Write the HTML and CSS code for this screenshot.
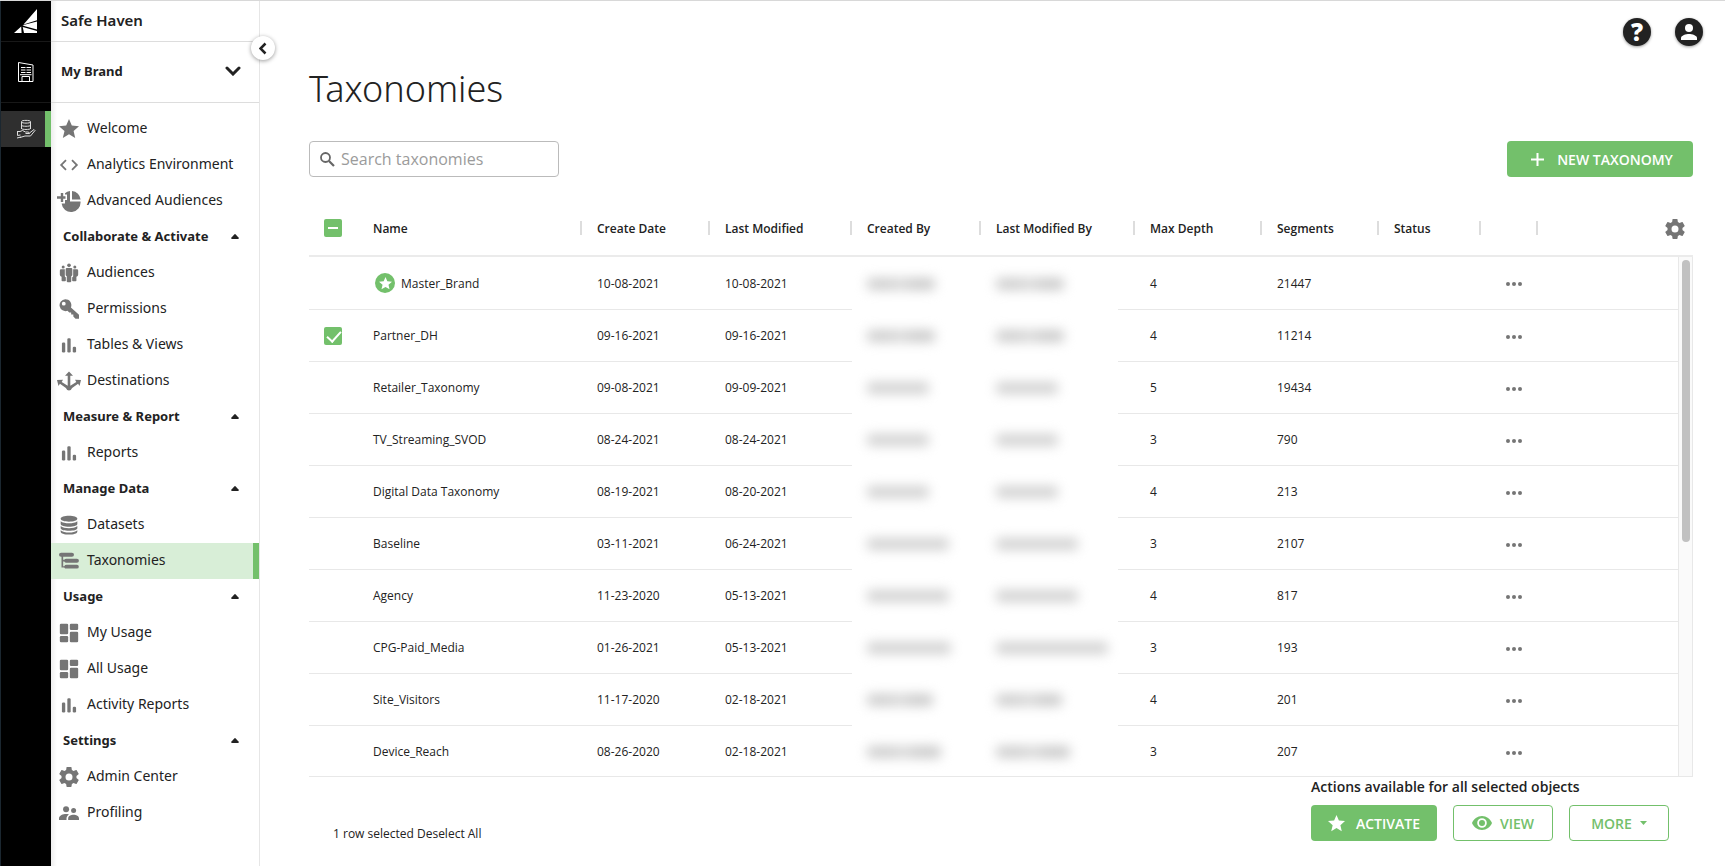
FILE: index.html
```html
<!DOCTYPE html>
<html lang="en">
<head>
<meta charset="utf-8">
<title>Taxonomies</title>
<link rel="stylesheet" href="styles.css">
</head>
<body>
<svg class="defs" aria-hidden="true">
  <symbol id="star" viewBox="2 2 20 20"><path d="M12 17.3l6.2 3.7-1.6-7L22 9.2l-7.200-.6L12 2 9.200 8.600 2 9.200 7.500 14l-1.700 7z"/></symbol>
  <symbol id="code" viewBox="1 1 22 22"><path d="M9.400 16.600 4.800 12l4.600-4.600L8 6l-6 6 6 6zM14.600 16.600l4.600-4.600-4.600-4.600L16 6l6 6-6 6z"/></symbol>
  <symbol id="pie" viewBox="0 0 24 24"><path d="M0 7.300h3.800V4h2.400v3.300h2.300v2.400H6.200V13H3.800V9.700H0zM8 4.200q2-1.800 5-2.200v10.500h10.500A9.500 9.500 0 0 1 4.600 14.500H8V11h2V5.500H8zM15 2a9.200 9.200 0 0 1 8.600 8.600H15z"/></symbol>
  <symbol id="people" viewBox="0 0 24 24"><circle cx="12" cy="2.800" r="2.200"/><circle cx="5" cy="4.800" r="1.800"/><circle cx="19" cy="4.800" r="1.800"/><path d="M9.500 6h5Q16 6 16 7.500V14q0 1.500-1.300 1.700V22q0 1-1 1h-3.400q-1 0-1-1v-6.300Q8 15.500 8 14V7.500Q8 6 9.500 6zM2.500 7.500H7V16q.2.900 1.200 1.200V21q0 1-1 1H4.100q-1 0-1-1v-4.500Q1 16 1 14V9Q1 7.500 2.500 7.500zM21.500 7.500H17V16q-.2.900-1.200 1.200V21q0 1 1 1h3.100q1 0 1-1v-4.500q2.100-.5 2.100-2.500V9q0-1.500-1.500-1.500z"/></symbol>
  <symbol id="key" viewBox="0 0 24 24"><path fill-rule="evenodd" d="M7.500.2a7.200 7.200 0 1 0 2.700 14l2.100 2.100h2.300v2.400h2.600v2.400l2.600 2.700H24v-4.900l-9.700-8.800A7.200 7.200 0 0 0 7.500.2zM5.700 3.300a2.300 2.300 0 1 1 0 4.600 2.300 2.300 0 0 1 0-4.600z"/></symbol>
  <symbol id="bars" viewBox="0 0 24 24"><rect x="3.500" y="9" width="4" height="12" rx="1.500"/><rect x="10" y="4" width="4" height="17" rx="1.500"/><rect x="16.500" y="14" width="4" height="7" rx="1.500"/></symbol>
  <symbol id="dest" viewBox="0 0 24 24"><path d="m12 2.500 4 4.300h-2.700v10l6-3.800-1.300-2.300 6 .4-1.500 6-1.400-2.300-6 4.200Q14 21.500 12 21.500t-3.100-2.500l-6-4.200-1.400 2.300-1.500-6 6-.4L4.700 13l6 3.800v-10H8z"/></symbol>
  <symbol id="db" viewBox="0 0 24 24"><path d="M2 4.500C2 2.500 6.500 1 12 1s10 1.500 10 3.500S17.500 8 12 8 2 6.500 2 4.500zM2 7.500C4 9.300 8 10 12 10s8-.7 10-2.500v3.200C22 12.700 17.500 14 12 14S2 12.700 2 10.700zM2 13.300C4 15.200 8 16 12 16s8-.8 10-2.700V16c0 2-4.500 3-10 3S2 18 2 16zM2 18.200C4 20 8 21 12 21s8-1 10-2.800V20c0 2-4.500 3.500-10 3.500S2 22 2 20z"/></symbol>
  <symbol id="tree" viewBox="0 0 24 24"><path d="M2.500 2h13a2.300 2.300 0 0 1 0 5H5v3.600h1.300A3 3 0 0 1 9 9.300h12.500a2.400 2.400 0 0 1 0 4.800H9a3 3 0 0 1-2.700-1.500H5v5.600h1.300A3 3 0 0 1 9 16.500h12.500a2.300 2.300 0 0 1 0 4.600H9a3 3 0 0 1-2.700-1.400H3V7h-.5a2.500 2.500 0 0 1 0-5z"/></symbol>
  <symbol id="dash" viewBox="0 0 24 24"><rect x="1" y="1" width="10" height="12.500" rx="1.500"/><rect x="13" y="1" width="10" height="7.500" rx="1.500"/><rect x="1" y="15.500" width="10" height="7.500" rx="1.500"/><rect x="13" y="10.500" width="10" height="12.500" rx="1.500"/></symbol>
  <symbol id="gear" viewBox="2 2 20 20"><path d="M19.430 12.980c.04-.32.070-.64.070-.98s-.03-.66-.07-.98l2.110-1.650c.19-.15.240-.42.120-.64l-2-3.460c-.12-.22-.39-.3-.61-.22l-2.490 1c-.52-.4-1.080-.73-1.690-.98l-.38-2.650C14.460 2.180 14.250 2 14 2h-4c-.25 0-.46.180-.49.420l-.38 2.650c-.61.250-1.170.590-1.690.98l-2.490-1c-.23-.09-.49 0-.61.220l-2 3.460c-.13.220-.07.490.12.640l2.110 1.650c-.04.320-.07.650-.07.980s.03.660.07.980l-2.110 1.650c-.19.150-.24.420-.12.640l2 3.460c.12.220.39.300.61.220l2.490-1c.52.400 1.080.730 1.690.98l.38 2.650c.03.240.24.420.49.420h4c.25 0 .46-.18.490-.42l.38-2.650c.61-.25 1.170-.59 1.690-.98l2.490 1c.23.090.49 0 .61-.22l2-3.460c.12-.22.070-.49-.12-.64zM12 15.500a3.500 3.500 0 1 1 0-7 3.500 3.500 0 0 1 0 7z"/></symbol>
  <symbol id="profiles" viewBox="0 0 24 24"><circle cx="8.500" cy="7.500" r="3.600"/><circle cx="17.500" cy="9" r="3"/><path d="M0 20.500v-2C0 15 5 13.300 8.500 13.300c1 0 2.300.2 3.500.5-1.800 1.200-3 2.700-3 4.700v2zM11 20.500v-2.300c0-2.800 3.500-4.200 6.500-4.200s6.500 1.400 6.500 4.200v2.300z"/></symbol>
  <symbol id="dots" viewBox="0 0 16 4"><circle cx="2" cy="2" r="2"/><circle cx="8" cy="2" r="2"/><circle cx="14" cy="2" r="2"/></symbol>
  <symbol id="up" viewBox="0 0 8 5"><path d="M4 0q.5 0 3.800 3.800Q8 5 7 5H1Q0 5 .2 3.800 3.500 0 4 0z"/></symbol>
</svg>
<div class="app">
  <nav class="rail" aria-label="Products">
    <a class="rail-logo" href="#" aria-label="Home"><svg width="24" height="25" viewBox="0 0 24 25"><path fill="#fff" d="M23 0v11.200L9.500 15.600 23 0zM23 12.600v8L11 17.300l-2.500-1zM7.200 17.500l.4 6.500H0zM8.700 18l14.300 4v2H10z"/></svg></a>
    <a class="rail-item" href="#" aria-label="Organization"><svg width="18" height="22" viewBox="0 0 18 22" fill="none" stroke="#fff"><path d="M1.500 20.500V1.500l14.500 2.500v16.500z"/><path d="M4 6.500h10M4 9h10M4 11.500h10" stroke-dasharray="4.500 1"/><path d="M5 20.500v-5h7.500v5M3 13.700h11.500"/></svg></a>
    <a class="rail-item current" href="#" aria-label="Data"><svg width="20" height="21" viewBox="0 0 20 21" fill="none" stroke="#ddd"><path d="M5.500 10V2.500C5.500 1 14.500 1 14.500 2.500V10M5.500 3c0 1.500 9 1.500 9 0M5.500 6.300c0 1.300 9 1.300 9 0M5.500 9.500c0 1.300 9 1.300 9 0M1 12.500h3l2.500-1 3 1.500h3l1 1.500h-4M13.500 14l4.500-3.500 1 1-4.500 5.500H9l-5 1.500M1 19l4-1M1.500 12.500v4l3-.5"/></svg></a>
  </nav>
  <aside class="side">
    <button class="collapse" aria-label="Collapse menu"><svg width="8" height="13" viewBox="0 0 8 13"><path d="M6.500 1.500l-5 5 5 5" fill="none" stroke="#222" stroke-width="2.500"/></svg></button>
    <div class="product">Safe Haven</div>
    <button class="brand">My Brand<svg width="16" height="10" viewBox="0 0 16 10"><path d="M2 2l6 6 6-6" fill="none" stroke="#222" stroke-width="3" stroke-linecap="round"/></svg></button>
    <div class="menu">
      <a href="#"><svg><use href="#star"/></svg>Welcome</a>
      <a href="#"><svg><use href="#code"/></svg>Analytics Environment</a>
      <a href="#"><svg class="wide"><use href="#pie"/></svg>Advanced Audiences</a>
      <button>Collaborate &amp; Activate<svg><use href="#up"/></svg></button>
      <a href="#"><svg><use href="#people"/></svg>Audiences</a>
      <a href="#"><svg><use href="#key"/></svg>Permissions</a>
      <a href="#"><svg><use href="#bars"/></svg>Tables &amp; Views</a>
      <a href="#"><svg class="wide"><use href="#dest"/></svg>Destinations</a>
      <button>Measure &amp; Report<svg><use href="#up"/></svg></button>
      <a href="#"><svg><use href="#bars"/></svg>Reports</a>
      <button>Manage Data<svg><use href="#up"/></svg></button>
      <a href="#"><svg><use href="#db"/></svg>Datasets</a>
      <a href="#" class="current" aria-current="page"><svg><use href="#tree"/></svg>Taxonomies</a>
      <button>Usage<svg><use href="#up"/></svg></button>
      <a href="#"><svg><use href="#dash"/></svg>My Usage</a>
      <a href="#"><svg><use href="#dash"/></svg>All Usage</a>
      <a href="#"><svg><use href="#bars"/></svg>Activity Reports</a>
      <button>Settings<svg><use href="#up"/></svg></button>
      <a href="#"><svg><use href="#gear"/></svg>Admin Center</a>
      <a href="#"><svg><use href="#profiles"/></svg>Profiling</a>
    </div>
  </aside>
  <main class="main">
    <header class="top">
      <button class="round" aria-label="Help">?</button>
      <button class="round" aria-label="Account"><svg width="16" height="16" viewBox="0 0 16 16" fill="#fff"><circle cx="8" cy="4" r="4"/><path d="M0 16v-2c0-2.500 5-4 8-4s8 1.500 8 4v2z"/></svg></button>
    </header>
    <h1>Taxonomies</h1>
    <div class="tools">
      <label class="search"><svg width="15" height="15" viewBox="0 0 15 15" fill="none" stroke="#666"><circle cx="5.500" cy="5.500" r="4.500" stroke-width="1.800"/><path d="M9 9l5 5" stroke-width="2.200"/></svg><input type="text" placeholder="Search taxonomies" aria-label="Search taxonomies"></label>
      <button class="btn new"><svg width="13" height="13" viewBox="0 0 13 13"><path d="M6.500 0v13M0 6.500h13" stroke="#fff" stroke-width="2"/></svg>NEW TAXONOMY</button>
    </div>
    <div class="grid">
      <table>
        <colgroup><col class="c-check"><col class="c-name"><col class="c-created"><col class="c-modified"><col class="c-by"><col class="c-modby"><col class="c-depth"><col class="c-seg"><col class="c-status"><col class="c-more"><col></colgroup>
        <thead><tr>
          <th class="pick"><input type="checkbox" class="some" aria-label="Select all"></th>
          <th><span>Name</span></th><th><span>Create Date</span></th><th><span>Last Modified</span></th><th><span>Created By</span></th><th><span>Last Modified By</span></th><th><span>Max Depth</span></th><th><span>Segments</span></th><th><span>Status</span></th><th><span></span></th>
          <th class="conf"><button aria-label="Table settings"><svg width="20" height="20"><use href="#gear"/></svg></button></th>
        </tr></thead>
        <tbody id="rows"></tbody>
      </table>
      <div class="track"><div class="thumb"></div></div>
    </div>
    <footer class="foot">
      <p>1 row selected <a href="#">Deselect All</a></p>
      <section class="actions">
        <h2>Actions available for all selected objects</h2>
        <div class="buttons">
          <button class="btn activate"><svg width="17" height="17" fill="#fff"><use href="#star"/></svg>ACTIVATE</button>
          <button class="btn line"><svg width="20" height="14" viewBox="0 0 20 14"><path fill="#73c06b" fill-rule="evenodd" d="M10 0c4.500 0 8.400 2.900 10 7-1.600 4.100-5.500 7-10 7S1.600 11.100 0 7c1.600-4.100 5.500-7 10-7zm0 2.200a4.800 4.800 0 1 0 0 9.600 4.800 4.800 0 0 0 0-9.600zM10 4a3 3 0 1 1 0 6 3 3 0 0 1 0-6z"/></svg>VIEW</button>
          <button class="btn line">MORE<svg width="7" height="4" viewBox="0 0 7 4"><path fill="#73c06b" d="M0 0h7L3.500 4z"/></svg></button>
        </div>
      </section>
    </footer>
  </main>
</div>
<script src="rows.js"></script>
</body>
</html>
```
FILE: styles.css
```css
* { box-sizing: border-box; }
body { margin: 0; background: #fff; color: #222; font-family: "Open Sans", "Noto Sans", sans-serif; font-size: 12px; }
button { font: inherit; color: inherit; border: 0; background: none; padding: 0; }
a { color: inherit; text-decoration: none; }
svg { flex: none; display: block; }
.defs { position: absolute; width: 0; height: 0; }
.app { display: flex; min-height: 100vh; border-top: 1px solid #d8d8d8; }

.rail { width: 51px; background: #000; border-left: 1px solid #1b2730; flex: none; }
.rail a { display: flex; align-items: center; justify-content: center; }
.rail-logo { height: 41px; border-bottom: 1px solid #181818; }
.rail-item { height: 61px; border-bottom: 1px solid #181818; }
.rail-item.current { height: 36px; margin-top: 8px; padding-left: 6px; background: #2f2f2f; border-bottom: 0; border-right: 6px solid #73c06b; }

.side { position: relative; width: 209px; flex: none; border-right: 1px solid #e6e6e6; background: linear-gradient(90deg, #eee, #fff 6px); font-family: "Noto Sans", sans-serif; }
.product { height: 41px; padding-left: 10px; line-height: 38px; font-size: 15px; font-weight: 600; border-bottom: 1px solid #ddd; }
.brand { display: flex; align-items: center; justify-content: space-between; width: 100%; height: 61px; padding: 0 18px 2px 10px; font-size: 13px; font-weight: 700; border-bottom: 1px solid #ddd; }
.collapse { position: absolute; right: -16px; top: 35px; width: 24px; height: 24px; border-radius: 50%; background: #fff; box-shadow: 0 1px 4px rgba(0,0,0,.4); display: flex; align-items: center; justify-content: center; }
.menu { padding-top: 8px; font-size: 14px; }
.menu a, .menu button { display: flex; align-items: center; width: 100%; height: 36px; padding: 0 0 3px 8px; gap: 8px; white-space: nowrap; }
.menu a svg { width: 20px; height: 20px; margin-top: 2px; fill: #757575; }
.menu a svg.wide { width: 24px; height: 24px; margin: 2px -2px 0; }
.menu button { justify-content: space-between; padding: 0 20px 3px 12px; font-size: 13px; font-weight: 700; }
.menu button svg { width: 8px; height: 5px; margin-top: 2px; fill: #222; }
.menu a.current { background: #d8eed7; border-right: 6px solid #73c06b; }

.main { flex: 1; min-width: 0; padding: 0 32px 0 49px; }
.top { display: flex; justify-content: flex-end; gap: 24px; padding-top: 17px; margin-right: -10px; }
.round { width: 28px; height: 28px; border-radius: 50%; background: #222; color: #fff; font-size: 24px; font-weight: 800; line-height: 28px; box-shadow: 0 1px 3px rgba(0,0,0,.4); display: flex; align-items: center; justify-content: center; }
h1 { margin: 20px 0 0; height: 46px; line-height: 46px; font-family: "Noto Sans", sans-serif; font-size: 36px; font-weight: 300; }
.tools { display: flex; justify-content: space-between; margin-top: 29px; }
.search { display: flex; align-items: center; gap: 6px; width: 250px; height: 36px; padding: 0 10px; border: 1px solid #bbb; border-radius: 4px; }
.search input { flex: 1; min-width: 0; border: 0; padding: 0; outline: 0; font: 16px "Open Sans", sans-serif; }
.search input::placeholder { color: #9b9b9b; }
.btn { display: flex; align-items: center; justify-content: center; height: 36px; border-radius: 4px; background: #73c06b; color: #fff; font-size: 14px; font-weight: 600; }
.new { width: 186px; gap: 13px; padding-left: 4px; }

.grid { position: relative; margin-top: 24px; height: 576px; overflow: hidden; border-bottom: 1px solid #e8e8e8; }
table { width: 100%; table-layout: fixed; border-collapse: separate; border-spacing: 0; }
.c-check { width: 49px; } .c-name { width: 224px; } .c-created { width: 128px; } .c-modified { width: 142px; }
.c-by { width: 129px; } .c-modby { width: 154px; } .c-depth { width: 127px; } .c-seg { width: 117px; }
.c-status { width: 102px; } .c-more { width: 57px; }
th, td { padding: 0 0 0 15px; text-align: left; white-space: nowrap; }
th { height: 56px; font-weight: 600; border-bottom: 2px solid #ebebeb; }
th span { display: flex; align-items: center; height: 14px; border-right: 2px solid #ddd; }
td { height: 52px; border-bottom: 1px solid #e8e8e8; }
tbody tr:first-child td { height: 53px; }
tbody tr:last-child td { border-bottom-color: transparent; }
th.conf { padding: 2px 8px 0 0; }
.conf button { display: block; margin-left: auto; }
.conf svg { fill: #757575; }
input[type=checkbox] { appearance: none; display: block; width: 18px; height: 18px; margin: 0; border-radius: 2px; background: #73c06b; position: relative; }
.some::after { content: ""; position: absolute; left: 4px; top: 8px; width: 10px; height: 2px; background: #fff; }
.tick::after { content: ""; position: absolute; left: 6px; top: 1px; width: 6px; height: 12px; border: solid #fff; border-width: 0 2px 2px 0; transform: rotate(42deg); }
.name { display: flex; align-items: center; gap: 6px; }
.badge { display: flex; align-items: center; justify-content: center; width: 20px; height: 20px; margin-left: 2px; border-radius: 50%; background: #73c06b; }
.badge svg { width: 13px; height: 13px; fill: #fff; }
td.hid { border-bottom: 0; }
td.hid-end { background: linear-gradient(#e8e8e8, #e8e8e8) right bottom / 17px 1px no-repeat; }
.smudge { display: block; height: 12px; border-radius: 4px; background: #d2d2d2; filter: blur(6px); }
.smudge.two { background: linear-gradient(90deg, #cecece 35%, #dadada 48%, #cacaca 70%); }
.menu-dots { display: block; margin: 2px 0 0 10px; }
.menu-dots svg { width: 16px; height: 4px; fill: #757575; }
.track { position: absolute; right: 0; top: 56px; bottom: 0; width: 15px; background: #fafafa; border: solid #e8e8e8; border-width: 0 1px; padding: 3px 2px 0 3px; }
.thumb { height: 282px; border-radius: 4px; background: #c1c1c1; }

.foot { display: flex; justify-content: space-between; padding: 0 24px; }
.foot p { margin: 49px 0 0; line-height: 16px; }
h2 { margin: 0; line-height: 20px; font-size: 14px; font-weight: 600; }
.actions { width: 358px; }
.buttons { display: flex; gap: 16px; margin-top: 8px; }
.activate { width: 126px; gap: 11px; }
.line { width: 100px; gap: 8px; background: #fff; border: 1px solid #73c06b; color: #73c06b; }
```
FILE: rows.js
```js
const rows = [
  ["Master_Brand", "10-08-2021", "10-08-2021", 68, 68, 4, 21447],
  ["Partner_DH", "09-16-2021", "09-16-2021", 68, 68, 4, 11214],
  ["Retailer_Taxonomy", "09-08-2021", "09-09-2021", 62, 62, 5, 19434],
  ["TV_Streaming_SVOD", "08-24-2021", "08-24-2021", 62, 62, 3, 790],
  ["Digital Data Taxonomy", "08-19-2021", "08-20-2021", 62, 62, 4, 213],
  ["Baseline", "03-11-2021", "06-24-2021", 82, 82, 3, 2107],
  ["Agency", "11-23-2020", "05-13-2021", 82, 82, 4, 817],
  ["CPG-Paid_Media", "01-26-2021", "05-13-2021", 84, 112, 3, 193],
  ["Site_Visitors", "11-17-2020", "02-18-2021", 66, 66, 4, 201],
  ["Device_Reach", "08-26-2020", "02-18-2021", 74, 74, 3, 207]
];
document.getElementById("rows").innerHTML = rows.map((r, i) => {
  const two = [0, 1, 8, 9].includes(i) ? " two" : "";
  const pick = i === 1 ? '<input type="checkbox" class="tick" checked aria-label="Select ' + r[0] + '">' : "";
  const badge = i === 0 ? '<i class="badge"><svg><use href="#star"/></svg></i>' : "";
  return `<tr><td class="pick">${pick}</td><td><div class="name">${badge}${r[0]}</div></td><td>${r[1]}</td><td>${r[2]}</td>
    <td class="hid"><span class="smudge${two}" style="width:${r[3]}px"></span></td>
    <td class="hid hid-end"><span class="smudge${two}" style="width:${r[4]}px"></span></td>
    <td>${r[5]}</td><td>${r[6]}</td><td></td>
    <td><button class="menu-dots" aria-label="More actions"><svg><use href="#dots"/></svg></button></td><td></td></tr>`;
}).join("");
```
